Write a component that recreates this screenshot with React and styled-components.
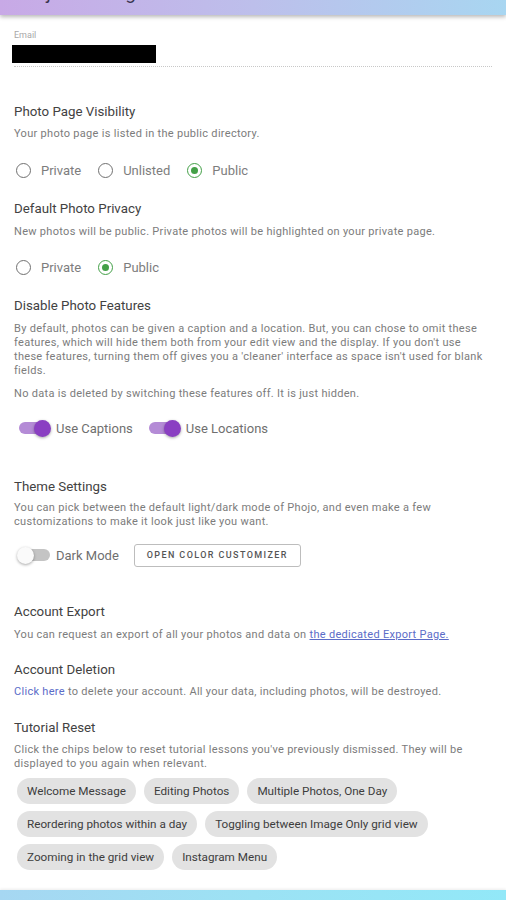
import React from "react";
import styled, { createGlobalStyle } from "styled-components";

const Global = createGlobalStyle`
  html, body { margin: 0; padding: 0; background: #fff; }
  body { font-family: Roboto, "Liberation Sans", sans-serif; -webkit-font-smoothing: antialiased; }
  * { box-sizing: border-box; }
`;

const Page = styled.div`
  width: 506px;
  height: 900px;
  display: flex;
  flex-direction: column;
  overflow: hidden;
`;

const Header = styled.header`
  height: 15px;
  flex: none;
  display: flex;
  align-items: flex-end;
  padding-left: 13px;
  overflow: hidden;
  background: linear-gradient(90deg, #c8a9e6 0%, #bdbfeb 50%, #a8d6f1 100%);
  box-shadow: 0 2px 4px rgba(0, 0, 0, 0.28);
  position: relative;
  z-index: 1;
`;

const HeaderTitle = styled.h1`
  margin: 0 0 12px 0;
  font-size: 19px;
  line-height: 20px;
  font-weight: 400;
  color: #3a3550;
  white-space: nowrap;
`;

const Content = styled.main`
  flex: 1;
  padding: 14px 14px 0 14px;
  display: flex;
  flex-direction: column;
`;

const EmailField = styled.div`
  display: flex;
  flex-direction: column;
  border-bottom: 1px dotted #c8c8c8;
  padding-bottom: 3px;
  margin-bottom: 35px;
`;

const EmailLabel = styled.label`
  font-size: 9px;
  line-height: 12px;
  color: #a8a8a8;
  margin-bottom: 4px;
`;

const Redacted = styled.div`
  width: 144px;
  height: 18px;
  margin-left: -2px;
  background: #000;
`;

const Section = styled.section`
  display: flex;
  flex-direction: column;
  margin-bottom: ${(p) => p.$after || 0}px;
`;

const Title = styled.h2`
  margin: 0 0 ${(p) => p.$gap ?? 5}px 0;
  font-size: 13.3px;
  line-height: 20px;
  font-weight: 400;
  color: #424242;
`;

const Desc = styled.p`
  margin: 0 0 ${(p) => p.$after || 0}px 0;
  font-size: 11px;
  letter-spacing: 0.3px;
  line-height: 14px;
  color: #7c7c7c;
`;

const Link = styled.a`
  color: #5b6cc8;
  text-decoration: ${(p) => (p.$underline ? "underline" : "none")};
  cursor: pointer;
`;

const ControlRow = styled.div`
  display: flex;
  align-items: center;
  height: 30px;
  margin-top: ${(p) => p.$top ?? 13}px;
`;

const RadioLabel = styled.label`
  display: flex;
  align-items: center;
  margin-right: 15px;
  font-size: 13px;
  color: #7d7d7d;
`;

const RadioCircle = styled.span`
  width: 15px;
  height: 15px;
  margin-left: 2px;
  margin-right: 10px;
  border-radius: 50%;
  border: 1.6px solid ${(p) => (p.$checked ? "#43a047" : "#707070")};
  display: flex;
  align-items: center;
  justify-content: center;
  &::after {
    content: "";
    width: 7px;
    height: 7px;
    border-radius: 50%;
    background: #43a047;
    display: ${(p) => (p.$checked ? "block" : "none")};
  }
`;

const Radio = ({ label, checked }) => (
  <RadioLabel>
    <RadioCircle $checked={checked} />
    {label}
  </RadioLabel>
);

const SwitchLabel = styled.label`
  display: flex;
  align-items: center;
  margin-right: ${(p) => p.$right ?? 11}px;
  font-size: 13px;
  color: #6f6f6f;
`;

const SwitchBox = styled.span`
  position: relative;
  width: 38px;
  height: 20px;
  margin-right: 4px;
  display: inline-block;
  flex: none;
`;

const Track = styled.span`
  position: absolute;
  left: 5px;
  top: 4px;
  width: 31px;
  height: 12px;
  border-radius: 6px;
  background: ${(p) => (p.$on ? "#b48bd6" : "#c4c4c4")};
`;

const Thumb = styled.span`
  position: absolute;
  top: 1.5px;
  left: ${(p) => (p.$on ? "20px" : "3px")};
  width: 17px;
  height: 17px;
  border-radius: 50%;
  background: ${(p) => (p.$on ? "#8a3fc2" : "#fafafa")};
  box-shadow: 0 1px 3px rgba(0, 0, 0, 0.35);
`;

const Switch = ({ label, on, right }) => (
  <SwitchLabel $right={right}>
    <SwitchBox>
      <Track $on={on} />
      <Thumb $on={on} />
    </SwitchBox>
    {label}
  </SwitchLabel>
);

const OutlineButton = styled.button`
  height: 23px;
  width: 167px;
  padding: 0;
  border: 1px solid #bdbdbd;
  border-radius: 3px;
  background: #fff;
  font-family: Roboto, "Liberation Sans", sans-serif;
  font-size: 9px;
  font-weight: 500;
  letter-spacing: 1.4px;
  color: #555;
  text-transform: uppercase;
`;

const Chips = styled.div`
  display: flex;
  flex-wrap: wrap;
  gap: 7px 8px;
  padding-left: 3px;
  margin-top: 7px;
`;

const Chip = styled.span`
  height: 26px;
  padding: 0 10px;
  border-radius: 13px;
  background: #e2e2e2;
  display: inline-flex;
  align-items: center;
  font-size: 11.7px;
  color: #3d3d3d;
  white-space: nowrap;
`;

const Footer = styled.footer`
  height: 10px;
  flex: none;
  background: linear-gradient(90deg, #a6d7f2 0%, #9ce2f4 50%, #92e8f8 100%);
  box-shadow: 0 -1px 3px rgba(0, 0, 0, 0.08);
`;

const chips = [
  "Welcome Message",
  "Editing Photos",
  "Multiple Photos, One Day",
  "Reordering photos within a day",
  "Toggling between Image Only grid view",
  "Zooming in the grid view",
  "Instagram Menu",
];

export default function App() {
  return (
    <Page>
      <Global />
      <Header>
        <HeaderTitle>Phojo - Settings</HeaderTitle>
      </Header>
      <Content>
        <EmailField>
          <EmailLabel>Email</EmailLabel>
          <Redacted />
        </EmailField>

        <Section $after={14}>
          <Title>Photo Page Visibility</Title>
          <Desc>Your photo page is listed in the public directory.</Desc>
          <ControlRow $top={14}>
            <Radio label="Private" />
            <Radio label="Unlisted" />
            <Radio label="Public" checked />
          </ControlRow>
        </Section>

        <Section $after={14}>
          <Title $gap={6}>Default Photo Privacy</Title>
          <Desc>New photos will be public. Private photos will be highlighted on your private page.</Desc>
          <ControlRow $top={13}>
            <Radio label="Private" />
            <Radio label="Public" checked />
          </ControlRow>
        </Section>

        <Section $after={34}>
          <Title $gap={6}>Disable Photo Features</Title>
          <Desc $after={9}>
            By default, photos can be given a caption and a location. But, you can chose to omit these
            features, which will hide them both from your edit view and the display. If you don't use
            these features, turning them off gives you a 'cleaner' interface as space isn't used for blank
            fields.
          </Desc>
          <Desc>No data is deleted by switching these features off. It is just hidden.</Desc>
          <ControlRow $top={12}>
            <Switch label="Use Captions" on />
            <Switch label="Use Locations" on />
          </ControlRow>
        </Section>

        <Section $after={32}>
          <Title $gap={4}>Theme Settings</Title>
          <Desc>
            You can pick between the default light/dark mode of Phojo, and even make a few
            customizations to make it look just like you want.
          </Desc>
          <ControlRow $top={11}>
            <Switch label="Dark Mode" right={15} />
            <OutlineButton>Open Color Customizer</OutlineButton>
          </ControlRow>
        </Section>

        <Section $after={18}>
          <Title $gap={6}>Account Export</Title>
          <Desc>
            You can request an export of all your photos and data on{" "}
            <Link $underline>the dedicated Export Page.</Link>
          </Desc>
        </Section>

        <Section $after={19}>
          <Title>Account Deletion</Title>
          <Desc>
            <Link>Click here</Link> to delete your account. All your data, including photos, will be destroyed.
          </Desc>
        </Section>

        <Section>
          <Title>Tutorial Reset</Title>
          <Desc>
            Click the chips below to reset tutorial lessons you've previously dismissed. They will be
            displayed to you again when relevant.
          </Desc>
          <Chips>
            {chips.map((c) => (
              <Chip key={c}>{c}</Chip>
            ))}
          </Chips>
        </Section>
      </Content>
      <Footer />
    </Page>
  );
}
